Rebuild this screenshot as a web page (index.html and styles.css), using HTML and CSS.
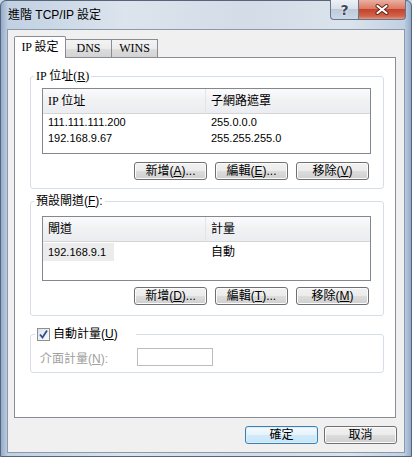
FILE: index.html
```html
<!DOCTYPE html>
<html lang="zh-Hant">
<head>
  <meta charset="UTF-8">
  <meta name="viewport" content="width=device-width, initial-scale=1.0">
  <title>進階 TCP/IP 設定</title>
  <link rel="stylesheet" href="styles.css">
</head>
<body>
  <div class="window">
    <div class="titlebar">
      <span class="title">進階 TCP/IP 設定</span>
      <div class="caption">
        <span class="cap cap-help">?</span>
        <span class="cap cap-close">
          <svg width="14" height="11" viewBox="0 0 14 11">
            <path d="M2.5 2 L11.5 9 M11.5 2 L2.5 9" stroke="#5b2418" stroke-width="4" stroke-linecap="round"/>
            <path d="M2.5 2 L11.5 9 M11.5 2 L2.5 9" stroke="#fff" stroke-width="2.2" stroke-linecap="round"/>
          </svg>
        </span>
      </div>
    </div>

    <div class="client">
      <div class="tabs">
        <span class="tab active serif">IP 設定</span>
        <span class="tab serif">DNS</span>
        <span class="tab serif">WINS</span>
      </div>

      <div class="pane">
        <fieldset class="group group-ip">
          <legend class="serif">IP 位址(<u>R</u>)</legend>
          <div class="list list-ip">
            <div class="list-head">
              <span class="serif">IP 位址</span>
              <span>子網路遮罩</span>
            </div>
            <div class="list-row num">
              <span>111.111.111.200</span>
              <span>255.0.0.0</span>
            </div>
            <div class="list-row num">
              <span>192.168.9.67</span>
              <span>255.255.255.0</span>
            </div>
          </div>
          <div class="btn-row">
            <button class="btn">新增(<u>A</u>)...</button>
            <button class="btn">編輯(<u>E</u>)...</button>
            <button class="btn">移除(<u>V</u>)</button>
          </div>
        </fieldset>

        <fieldset class="group group-gw">
          <legend>預設閘道(<u>F</u>):</legend>
          <div class="list list-gw">
            <div class="list-head">
              <span>閘道</span>
              <span>計量</span>
            </div>
            <div class="list-row">
              <span><em class="selected num">192.168.9.1</em></span>
              <span>自動</span>
            </div>
          </div>
          <div class="btn-row">
            <button class="btn">新增(<u>D</u>)...</button>
            <button class="btn">編輯(<u>T</u>)...</button>
            <button class="btn">移除(<u>M</u>)</button>
          </div>
        </fieldset>

        <fieldset class="group group-metric">
          <legend class="check-legend">
            <span class="checkbox">
              <svg width="11" height="11" viewBox="0 0 11 11">
                <path d="M2 5.5 L4.5 8.5 L9 1.5" fill="none" stroke="#2f4f95" stroke-width="1.8"/>
              </svg>
            </span>
            <span>自動計量(<u>U</u>)</span>
          </legend>
          <div class="metric-row">
            <span class="disabled-label">介面計量(<u>N</u>):</span>
            <span class="textbox"></span>
          </div>
        </fieldset>
      </div>

      <div class="actions">
        <button class="btn btn-default">確定</button>
        <button class="btn">取消</button>
      </div>
    </div>
  </div>
</body>
</html>
```

FILE: styles.css
```css
* {
  box-sizing: border-box;
}

body {
  margin: 0;
  font-family: "Liberation Sans", "Noto Sans CJK TC", sans-serif;
  font-size: 12px;
  color: #000;
  background: #c9d6e4;
}

.serif {
  font-family: "Liberation Serif", "Noto Sans CJK TC", serif;
}

.num {
  font-size: 11px;
}

u {
  text-decoration: underline;
}

/* window frame */

.window {
  width: 412px;
  height: 457px;
  padding: 0 6px 3px;
  border: 1px solid #56657a;
  border-radius: 6px 6px 0 0;
  background: linear-gradient(to right, #93abc9 0, #c1d0e2 7px, #dce4ed 30%, #d3dce7 60%, #dbe3ec 85%, #c1d0e2 calc(100% - 7px), #93abc9 100%);
}

.titlebar {
  display: flex;
  height: 28px;
}

.title {
  padding: 6px 0 0 1px;
  line-height: 16px;
}

.caption {
  display: flex;
  align-self: flex-start;
  margin: -1px -1px 0 auto;
}

.cap {
  display: flex;
  align-items: center;
  justify-content: center;
  height: 20px;
  border: 1px solid #66778d;
  border-top: none;
}

.cap-help {
  width: 28px;
  border-right: none;
  border-radius: 0 0 0 4px;
  background: linear-gradient(#eef2f7, #d9e1ea 45%, #bccadb 50%, #ccd8e5);
  font: bold 14px "DejaVu Sans", sans-serif;
  color: #3b4859;
  text-shadow: 0 0 2px #fff, 0 0 1px #fff;
}

.cap-close {
  width: 48px;
  border-radius: 0 0 4px 0;
  background: linear-gradient(#eab0a2, #dc7a64 45%, #c4432b 50%, #d2624a 85%, #e4997f);
}

/* client area */

.client {
  height: 424px;
  padding: 6px 8px 0 6px;
  border: 1px solid #8a99ac;
  background: #f0f0f0;
}

.tabs {
  display: flex;
  align-items: flex-end;
  height: 21px;
}

.tab {
  width: 47px;
  height: 18px;
  margin-left: -1px;
  border: 1px solid #898c95;
  border-bottom: none;
  background: linear-gradient(#f3f3f3, #ececec 50%, #dedede 50%, #d3d3d3);
  text-align: center;
  line-height: 16px;
}

.tab.active {
  position: relative;
  width: 52px;
  height: 22px;
  margin: 0 0 -1px;
  border-radius: 2px 2px 0 0;
  background: #fff;
  line-height: 20px;
}

.pane {
  height: 361px;
  padding: 11px 11px 0 15px;
  border: 1px solid #898c95;
  background: #fff;
}

/* group boxes */

.group {
  margin: 0;
  min-width: 0;
  border: 1px solid #d5dfe5;
  border-radius: 3px;
}

.group legend {
  margin-left: -8px;
  padding: 0 2px;
  line-height: 14px;
}

.group-ip {
  padding: 5px 12px 8px 11px;
}

.group-gw {
  margin-top: 5px;
  padding: 8px 12px 10px 11px;
}

.group-metric {
  margin-top: 11px;
  padding: 7px 12px 6px 9px;
}

.list {
  border: 1px solid #828790;
  background: #fff;
}

.list-ip {
  height: 66px;
}

.list-gw {
  height: 65px;
}

.list-head,
.list-row {
  display: grid;
  grid-template-columns: 163px 1fr;
}

.list-head {
  height: 25px;
  border-bottom: 1px solid #d5d5d5;
  background: linear-gradient(#fbfbfc, #f1f2f4 45%, #ebedf0);
}

.list-head span {
  padding: 0 5px;
  line-height: 24px;
}

.list-head span:first-child {
  border-right: 1px solid #e3e4e6;
}

.list-row span {
  padding: 0 5px;
  line-height: 16px;
}

.list-gw .list-row {
  margin-top: 1px;
}

.list-gw .list-row span {
  line-height: 18px;
}

.selected {
  display: block;
  width: fit-content;
  margin-left: -5px;
  padding: 0 8px 0 5px;
  font-style: normal;
  background: #ececec;
}

.btn-row {
  display: flex;
  justify-content: flex-end;
  gap: 8px;
  margin-top: 8px;
  padding-right: 2px;
}

.group-gw .btn-row {
  margin-top: 6px;
}

/* buttons */

.btn {
  width: 73px;
  height: 18px;
  padding: 0;
  border: 1px solid #707070;
  border-radius: 3px;
  background: linear-gradient(#f2f2f2, #ebebeb 50%, #dddddd 50%, #cfcfcf);
  box-shadow: inset 0 0 0 1px #fbfbfb;
  font: 12px "Liberation Sans", "Noto Sans CJK TC", sans-serif;
  line-height: 16px;
  color: #000;
}

.btn-default {
  border-color: #3c7fb1;
  background: linear-gradient(#f4fafe, #e5f3fc 50%, #d3ebfa 50%, #c6e4f7);
  box-shadow: inset 0 0 0 1px #d9f0fc;
}

/* checkbox group */

.check-legend {
  display: flex;
  align-items: center;
  gap: 3px;
  width: 101px;
  margin-left: -5px !important;
}

.checkbox {
  display: flex;
  align-items: center;
  justify-content: center;
  width: 13px;
  height: 13px;
  border: 1px solid #8e8f8f;
  background: linear-gradient(135deg, #dfe3ea, #f8f9fb);
}

.metric-row {
  display: flex;
  align-items: center;
  height: 18px;
}

.disabled-label {
  width: 97px;
  color: #a0a0a0;
}

.textbox {
  width: 76px;
  height: 18px;
  border: 1px solid #b9bdc1;
  background: #fff;
}

.actions {
  display: flex;
  justify-content: flex-end;
  gap: 6px;
  margin: 8px -1px 0 0;
}
```
